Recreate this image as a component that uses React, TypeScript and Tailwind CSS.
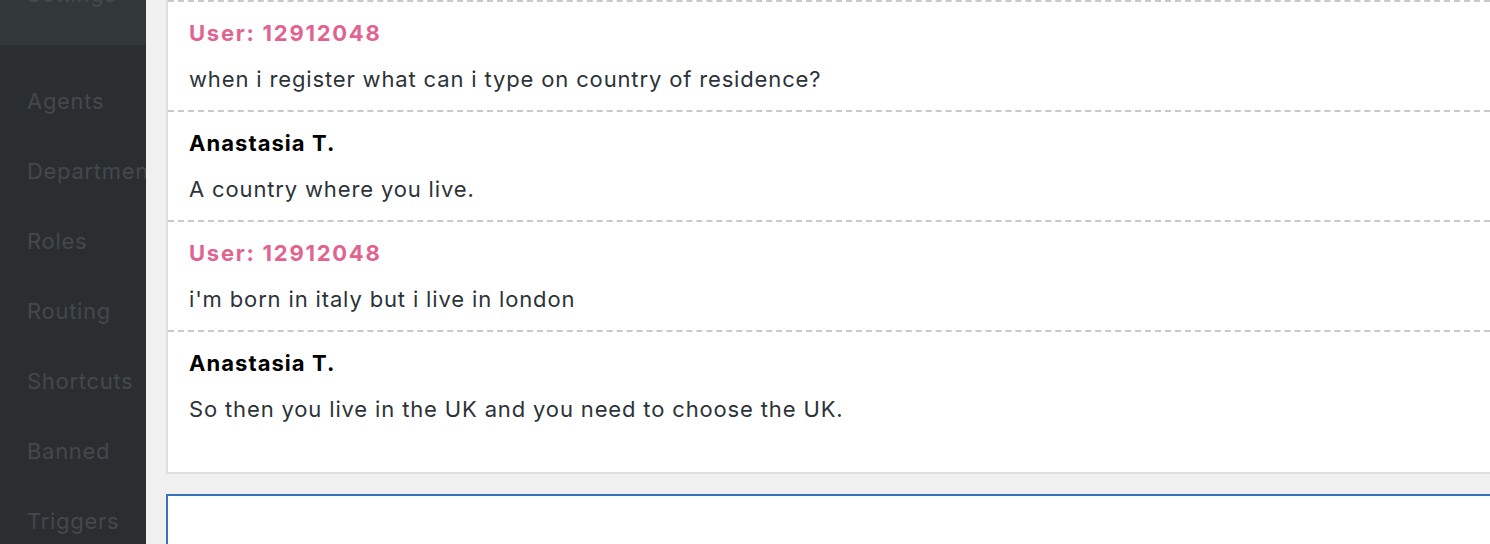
import React from "react";

const messages = [
  { user: true, name: "User: 12912048", text: "when i register what can i type on country of residence?" },
  { user: false, name: "Anastasia T.", text: "A country where you live." },
  { user: true, name: "User: 12912048", text: "i'm born in italy but i live in london" },
  { user: false, name: "Anastasia T.", text: "So then you live in the UK and you need to choose the UK." },
];

const nav = ["Agents", "Departments", "Roles", "Routing", "Shortcuts", "Banned", "Triggers"];

export default function App() {
  return (
    <div
      className="flex h-[544px] w-[1490px] overflow-hidden bg-[#f0f0f0]"
      style={{ fontFamily: "Inter, 'Noto Sans', sans-serif" }}
    >
      <aside className="flex w-[146px] shrink-0 flex-col overflow-hidden bg-[#2a2e31]">
        <div className="-mt-[25px] flex h-[70px] shrink-0 items-start bg-[#32373a] pl-[27px] pt-[4px] text-[22px] leading-[30px] tracking-[0.7px] text-[#454a4e]">
          Settings
        </div>
        <nav className="flex flex-col pt-[21px]">
          {nav.map((n) => (
            <div
              key={n}
              className="flex h-[70px] shrink-0 items-center whitespace-nowrap pl-[27px] text-[22px] tracking-[0.7px] text-[#43484c]"
            >
              {n}
            </div>
          ))}
        </nav>
      </aside>
      <main className="flex min-w-0 flex-1 flex-col pl-[20px]">
        <section className="shrink-0 border-b-2 border-l-2 border-[#dedede] bg-white pb-[32px]">
          {messages.map((m, i) => (
            <div key={i} className="border-t-2 border-dashed border-[#c9c9c9] px-[21px] pb-[16px] pt-[16px]">
              <div
                className={`text-[22px] font-bold leading-[30px] ${
                  m.user ? "tracking-[1.75px] text-[#e0648f]" : "tracking-[1.05px] text-black"
                }`}
              >
                {m.name}
              </div>
              <div className="mt-[16px] whitespace-nowrap text-[22px] leading-[30px] tracking-[0.85px] text-[#2c3338]">
                {m.text}
              </div>
            </div>
          ))}
        </section>
        <div className="mt-[20px] h-[140px] shrink-0 border-2 border-r-0 border-[#3872b6] bg-white" />
      </main>
    </div>
  );
}
